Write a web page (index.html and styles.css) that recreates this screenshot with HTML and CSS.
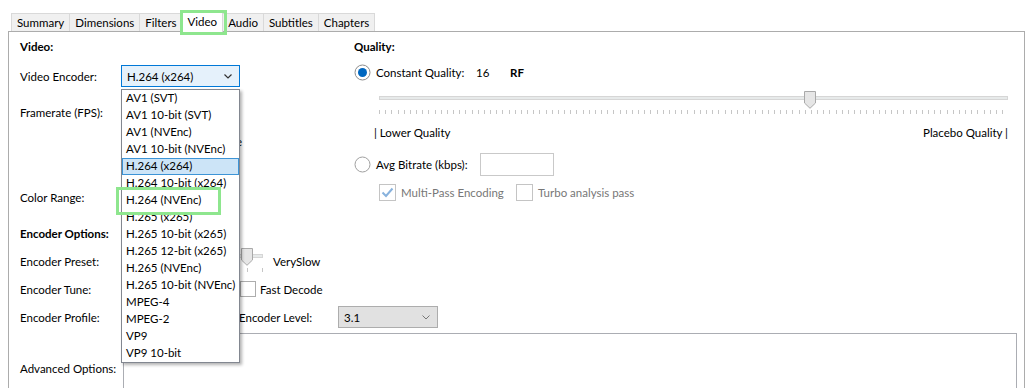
FILE: index.html
```html
<!DOCTYPE html>
<html lang="en">
<head>
    <meta charset="UTF-8">
    <title>HandBrake - Video</title>
    <link rel="stylesheet" href="styles.css">
</head>
<body>
<div class="page">
    <div class="tabs">
        <div class="tab">Summary</div>
        <div class="tab">Dimensions</div>
        <div class="tab">Filters</div>
        <div class="tab active">Video</div>
        <div class="tab">Audio</div>
        <div class="tab">Subtitles</div>
        <div class="tab">Chapters</div>
    </div>

    <div class="panel">
        <div class="top">
            <!-- left column -->
            <div class="left">
                <div class="row head-row"><span class="heading">Video:</span></div>
                <div class="row enc-row">
                    <span class="label">Video Encoder:</span>
                    <div class="select focused">
                        <span>H.264 (x264)</span>
                        <svg class="chev" width="8" height="5" viewBox="0 0 8 5"><path d="M0.5 0.5 L4 4 L7.5 0.5" fill="none" stroke="#333" stroke-width="1.2"/></svg>
                    </div>
                </div>
                <div class="row fps-row"><span class="label">Framerate (FPS):</span></div>
                <div class="row cfr-row">
                    <span class="label"></span>
                    <span class="radio"></span>
                    <span>Constant Framerate</span>
                </div>
                <div class="row range-row"><span class="label">Color Range:</span></div>
                <div class="row head-row opts-row"><span class="heading">Encoder Options:</span></div>
                <div class="row opt-row">
                    <span class="label">Encoder Preset:</span>
                    <div class="preset-slider">
                        <div class="track"></div>
                        <div class="ticks"></div>
                        <svg class="thumb" style="left: 88.9%" width="12" height="18" viewBox="0 0 12 18"><path d="M0.5 0.5 H11.5 V12 L6 17.3 L0.5 12 Z" fill="#e6e6e6" stroke="#a9a9a9"/></svg>
                    </div>
                    <span class="preset-name">VerySlow</span>
                </div>
                <div class="row opt-row">
                    <span class="label">Encoder Tune:</span>
                    <div class="tune-spacer"></div>
                    <span class="check"></span>
                    <span>Fast Decode</span>
                </div>
                <div class="row opt-row">
                    <span class="label">Encoder Profile:</span>
                    <div class="profile-spacer"></div>
                    <span class="level-label">Encoder Level:</span>
                    <div class="select plain">
                        <span>3.1</span>
                        <svg class="chev" width="8" height="5" viewBox="0 0 8 5"><path d="M0.5 0.5 L4 4 L7.5 0.5" fill="none" stroke="#777" stroke-width="1"/></svg>
                    </div>
                </div>
            </div>

            <!-- right column -->
            <div class="right">
                <div class="row head-row"><span class="heading">Quality:</span></div>
                <div class="row cq-row">
                    <svg class="radio-icon" width="17" height="17" viewBox="0 0 17 17"><circle cx="8.5" cy="8.5" r="7.5" fill="#fff" stroke="#8c8c8c"/><circle cx="8.5" cy="8.5" r="4.5" fill="#0067c0"/></svg>
                    <span class="cq-label">Constant Quality:</span>
                    <span class="cq-value">16</span>
                    <span class="rf">RF</span>
                </div>
                <div class="quality-slider">
                    <div class="track"></div>
                    <div class="ticks"></div>
                    <svg class="thumb" style="left: 68.6%" width="12" height="18" viewBox="0 0 12 18"><path d="M0.5 0.5 H11.5 V12 L6 17.3 L0.5 12 Z" fill="#e6e6e6" stroke="#a9a9a9"/></svg>
                </div>
                <div class="row scale-row">
                    <span>| Lower Quality</span>
                    <span>Placebo Quality |</span>
                </div>
                <div class="row abr-row">
                    <svg class="radio-icon" width="17" height="17" viewBox="0 0 17 17"><circle cx="8.5" cy="8.5" r="7.5" fill="#fff" stroke="#a0a0a0"/></svg>
                    <span class="abr-label">Avg Bitrate (kbps):</span>
                    <div class="textbox"></div>
                </div>
                <div class="row pass-row">
                    <svg class="check-icon" width="17" height="17" viewBox="0 0 17 17"><rect x="0.5" y="0.5" width="16" height="16" fill="#fff" stroke="#c4c4c4"/><path d="M3.5 8.5 L7 12 L13.5 4.5" fill="none" stroke="#88b2dd" stroke-width="2"/></svg>
                    <span class="disabled multi">Multi-Pass Encoding</span>
                    <svg class="check-icon" width="17" height="17" viewBox="0 0 17 17"><rect x="0.5" y="0.5" width="16" height="16" fill="#fff" stroke="#c4c4c4"/></svg>
                    <span class="disabled">Turbo analysis pass</span>
                </div>
            </div>
        </div>

        <div class="advanced">
            <span class="adv-label">Advanced Options:</span>
            <div class="textarea"></div>
        </div>
    </div>

    <!-- open encoder drop-down -->
    <ul class="dropdown">
        <li>AV1 (SVT)</li>
        <li>AV1 10-bit (SVT)</li>
        <li>AV1 (NVEnc)</li>
        <li>AV1 10-bit (NVEnc)</li>
        <li class="selected">H.264 (x264)</li>
        <li>H.264 10-bit (x264)</li>
        <li>H.264 (NVEnc)</li>
        <li>H.265 (x265)</li>
        <li>H.265 10-bit (x265)</li>
        <li>H.265 12-bit (x265)</li>
        <li>H.265 (NVEnc)</li>
        <li>H.265 10-bit (NVEnc)</li>
        <li>MPEG-4</li>
        <li>MPEG-2</li>
        <li>VP9</li>
        <li>VP9 10-bit</li>
    </ul>

    <!-- annotation boxes -->
    <div class="mark mark-tab"></div>
    <div class="mark mark-item"></div>
</div>
</body>
</html>
```

FILE: styles.css
```css
body {
    margin: 0;
    background: #fff;
    font-family: Lato, 'Segoe UI', Arial, sans-serif;
    font-size: 11.5px;
    color: #000;
}

.page {
    position: relative;
    width: 1026px;
    height: 388px;
    overflow: hidden;
}

/* tabs */
.tabs {
    display: flex;
    padding: 13px 0 0 11px;
    height: 18px;
}

.tab {
    height: 17px;
    line-height: 17px;
    padding: 0 5px;
    background: #f0f0f0;
    border: 1px solid #d9d9d9;
    border-bottom: none;
    margin-right: -1px;
}

.tab.active {
    background: #fff;
    margin-top: -2px;
    height: 20px;
    line-height: 19px;
    position: relative;
    z-index: 1;
}

/* panel */
.panel {
    margin: 0 1px 0 8px;
    border: 1px solid #acacac;
    border-bottom: none;
    height: 400px;
    padding: 0 7px 0 11px;
}

.top {
    display: flex;
    align-items: flex-start;
}

.left {
    width: 334px;
    flex: none;
}

.right {
    flex: 1;
}

.row {
    display: flex;
    align-items: center;
    white-space: nowrap;
}

.row > * {
    flex: none;
}

.heading {
    font-weight: bold;
}

.head-row {
    height: 20px;
    margin-top: 4px;
}

.label {
    width: 101px;
}

.enc-row {
    height: 22px;
    margin-top: 9px;
}

.fps-row {
    height: 20px;
    margin-top: 15px;
}

.cfr-row {
    height: 20px;
    margin-top: 9px;
}

.radio {
    width: 14px;
    height: 14px;
    border: 1px solid #999;
    border-radius: 50%;
    margin-right: 5px;
}

.range-row {
    height: 20px;
    margin-top: 36px;
}

.opts-row {
    margin-top: 16px;
}

.opt-row {
    height: 28px;
}

.opts-row + .opt-row {
    margin-top: 4px;
}

.select {
    position: relative;
    box-sizing: border-box;
    width: 119px;
    height: 22px;
    padding-left: 5px;
    display: flex;
    align-items: center;
}

.select.focused {
    background: #e5f1fb;
    border: 1px solid #0078d7;
}

.select.plain {
    width: 100px;
    background: #e1e1e1;
    border: 1px solid #adadad;
}

.chev {
    position: absolute;
    right: 7px;
    top: 8px;
}

/* sliders */
.preset-slider,
.quality-slider {
    position: relative;
}

.preset-slider {
    width: 142px;
    height: 28px;
}

.track {
    position: absolute;
    left: 0;
    right: 0;
    height: 2px;
    background: #e7eaea;
    border: 1px solid #d6d6d6;
}

.ticks {
    position: absolute;
    left: 0;
    right: 0;
    height: 4px;
    background: repeating-linear-gradient(to right, #c6c6c6 0 1px, transparent 1px 6.17px);
}

.thumb {
    position: absolute;
    top: 1px;
    margin-left: -6px;
}

.preset-slider .track {
    top: 7px;
}

.preset-slider .ticks {
    top: 21px;
    background: repeating-linear-gradient(to right, #c6c6c6 0 1px, transparent 1px 15.7px);
}

.preset-name {
    margin-left: 10px;
}

.tune-spacer {
    width: 119px;
}

.check {
    box-sizing: border-box;
    width: 16px;
    height: 16px;
    border: 1px solid #adadad;
    margin-right: 4px;
}

.profile-spacer {
    width: 118px;
}

.level-label {
    width: 99px;
}

/* right column */
.cq-row {
    height: 20px;
    margin-top: 6px;
}

.radio-icon {
    margin-right: 5px;
}

.cq-label {
    width: 100px;
}

.cq-value {
    width: 34px;
}

.rf {
    font-weight: bold;
}

.quality-slider {
    margin: 8px 0 0 25px;
    width: 629px;
    height: 26px;
}

.quality-slider .track {
    top: 6px;
}

.quality-slider .ticks {
    top: 20px;
}

.scale-row {
    height: 20px;
    margin: 6px 0 0 20px;
    width: 634px;
    justify-content: space-between;
}

.abr-row {
    height: 22px;
    margin-top: 11px;
}

.abr-label {
    width: 104px;
}

.textbox {
    box-sizing: border-box;
    width: 74px;
    height: 23px;
    border: 1px solid #c9c9c9;
}

.pass-row {
    height: 18px;
    margin: 8px 0 0 25px;
}

.check-icon {
    margin-right: 5px;
}

.multi {
    width: 115px;
}

.disabled {
    color: #777;
}

/* advanced options */
.advanced {
    display: flex;
    align-items: center;
    margin-top: 2px;
    white-space: nowrap;
}

.adv-label {
    width: 103px;
    flex: none;
}

.textarea {
    flex: 1;
    height: 68px;
    border: 1px solid #abadb3;
}

/* drop-down list */
.dropdown {
    position: absolute;
    left: 121px;
    top: 89px;
    width: 117px;
    margin: 0;
    padding: 0;
    list-style: none;
    background: #fff;
    border: 1px solid #828790;
    box-shadow: 2px 2px 3px rgba(0, 0, 0, 0.3);
    z-index: 5;
}

.dropdown li {
    box-sizing: border-box;
    height: 17px;
    line-height: 16px;
    padding-left: 4px;
    white-space: nowrap;
}

.dropdown li.selected {
    background: #cce4f7;
    border: 1px solid #3d94d6;
    padding-left: 3px;
    line-height: 14px;
}

/* annotation boxes */
.mark {
    position: absolute;
    border: 3px solid #8ee68e;
    z-index: 6;
}

.mark-tab {
    left: 180px;
    top: 10px;
    width: 41px;
    height: 19px;
}

.mark-item {
    left: 116px;
    top: 187px;
    width: 99px;
    height: 22px;
}
```
